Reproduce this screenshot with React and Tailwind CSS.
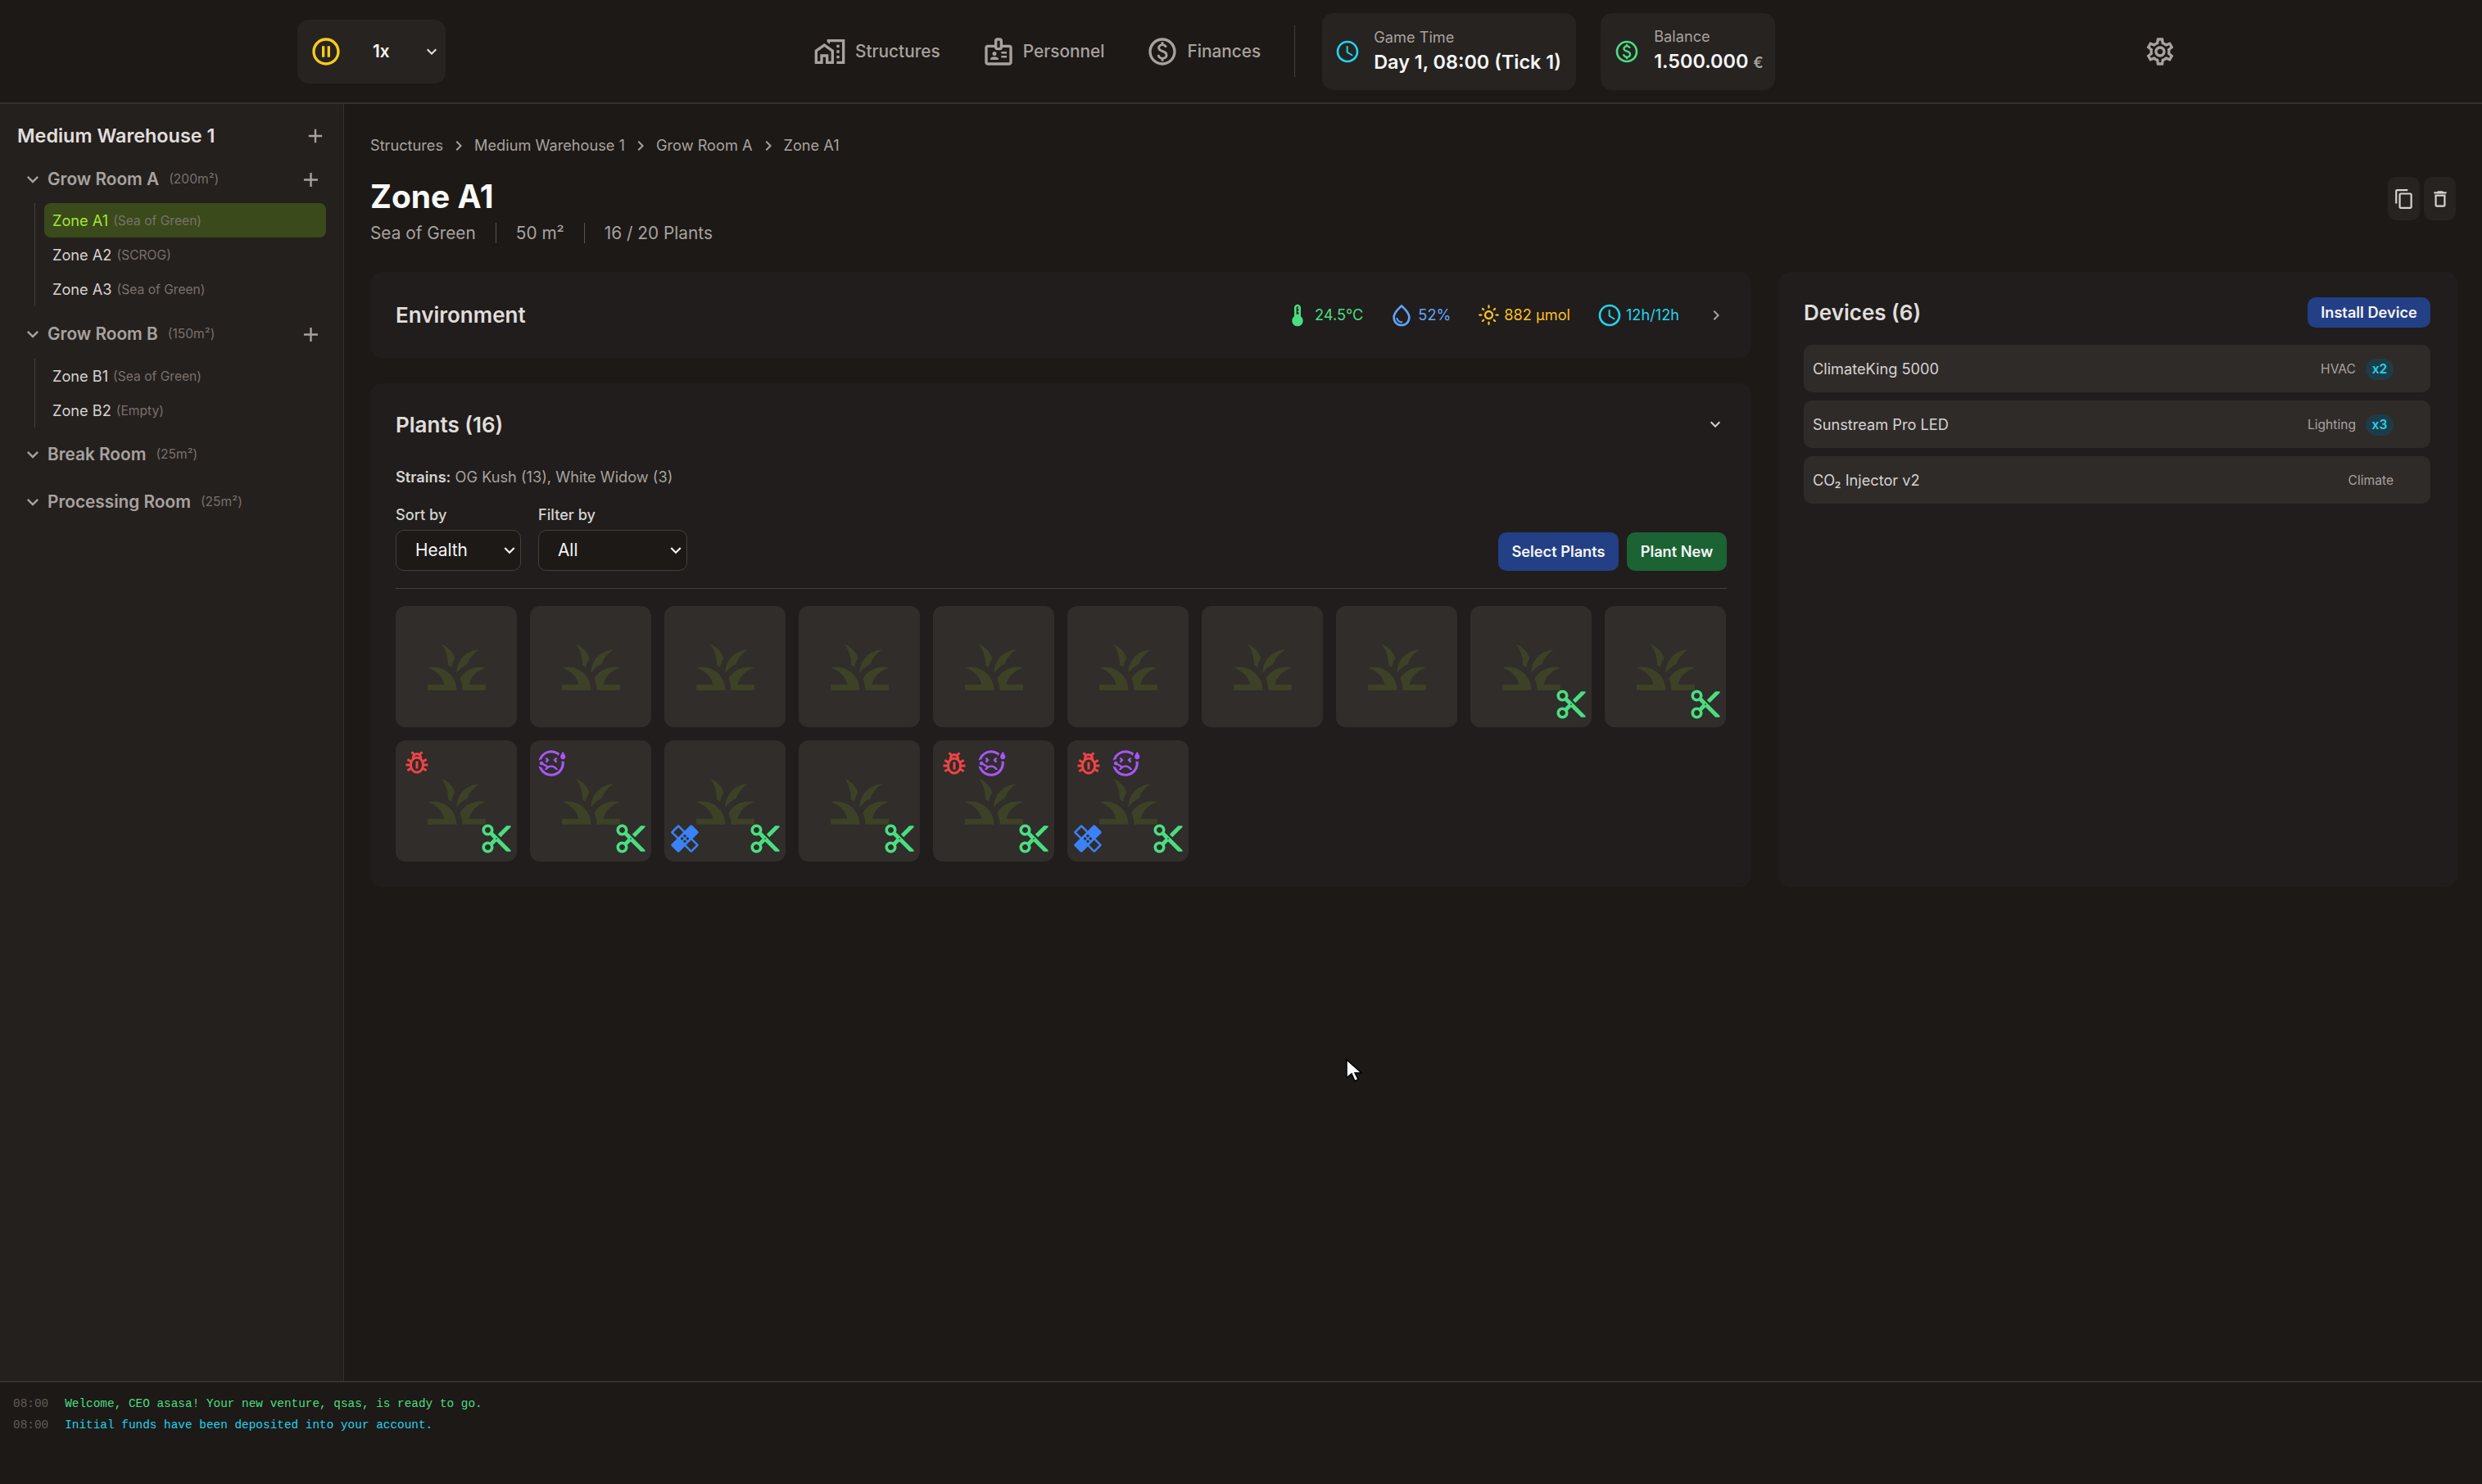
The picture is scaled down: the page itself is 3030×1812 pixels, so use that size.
import React from "react";
import {
  MdOutlineHomeWork, MdOutlineBadge, MdOutlinePaid, MdOutlineSchedule, MdOutlinePauseCircle, MdOutlineSettings,
  MdContentCopy, MdOutlineDelete, MdDeviceThermostat, MdOutlineWaterDrop, MdOutlineLightMode, MdGrass, MdContentCut,
  MdOutlinePestControl, MdOutlineSick, MdHealing, MdExpandMore, MdChevronRight, MdAdd,
} from "react-icons/md";

function NavItem({ icon: Icon, label, gap }) {
  return (
    <div className={`flex items-center ${gap}`}>
      <Icon size={40} className="text-[#a8a29e]" />
      <span className="text-[20.8px] font-medium text-[#a8a29e]">{label}</span>
    </div>
  );
}

function Header() {
  return (
    <header className="h-[127px] shrink-0 flex items-center border-b-2 border-[#35312e] pl-[363px] bg-[#1c1917]">
      <div className="w-[181px] h-[78px] rounded-[14px] bg-[#262321] flex items-center pl-[15px]">
        <MdOutlinePauseCircle size={40} className="text-[#facc15]" />
        <span className="ml-[37px] w-[22px] text-[20.8px] font-semibold text-[#f5f5f4]">1x</span>
        <MdExpandMore size={24} className="ml-[38px] text-[#e7e5e4]" />
      </div>
      <nav className="ml-[449px] flex items-center gap-[51px]">
        <NavItem icon={MdOutlineHomeWork} label="Structures" gap="gap-[11px]" />
        <NavItem icon={MdOutlineBadge} label="Personnel" gap="gap-[10px]" />
        <NavItem icon={MdOutlinePaid} label="Finances" gap="gap-[10px]" />
      </nav>
      <div className="ml-[41px] w-px h-[63px] bg-[#44403c]" />
      <div className="ml-[33px] w-[310px] h-[94px] rounded-[14px] bg-[#262321] flex items-center pl-[15px]">
        <MdOutlineSchedule size={32} className="text-[#22d3ee]" />
        <div className="ml-[16px]">
          <div className="text-[18.2px] leading-[26px] text-[#a8a29e]">Game Time</div>
          <div className="text-[23.4px] leading-[36px] font-semibold text-[#f5f5f4] whitespace-nowrap">Day 1, 08:00 (Tick 1)</div>
        </div>
      </div>
      <div className="ml-[30px] w-[213px] h-[94px] rounded-[14px] bg-[#262321] flex items-center pl-[16px]">
        <MdOutlinePaid size={32} className="text-[#4ade80]" />
        <div className="ml-[17px]">
          <div className="text-[18.2px] leading-[26px] text-[#a8a29e]">Balance</div>
          <div className="text-[23.4px] leading-[36px] font-semibold text-[#f5f5f4] whitespace-nowrap">1.500.000 <span className="text-[18.2px] text-[#a8a29e]">€</span></div>
        </div>
      </div>
      <MdOutlineSettings size={40} className="ml-[450px] text-[#a8a29e]" />
    </header>
  );
}

function Zone({ name, type, active }) {
  return (
    <div className={`h-[42px] rounded-[8px] flex items-center pl-[10px] pt-[1px] gap-[6px] ${active ? "bg-[#3a4a1a]" : ""}`}>
      <span className={`text-[18.2px] ${active ? "text-[#a3e635]" : "text-[#d6d3d1]"}`}>{name}</span>
      <span className="text-[15.6px] text-[#78716c]">{type}</span>
    </div>
  );
}

function Room({ name, size, plus, className = "mt-[13px]", zones, zonesMt = "mt-[9px]" }) {
  return (
    <div className={className}>
      <div className="h-[40px] flex items-center pl-[26px] pr-[25px]">
        <MdExpandMore size={28} className="text-[#a8a29e]" />
        <span className="ml-[4px] text-[20.8px] font-semibold text-[#a8a29e]">{name}</span>
        <span className="ml-[12px] text-[15.6px] text-[#78716c]">{size}</span>
        {plus && <MdAdd size={29} className="ml-auto text-[#a8a29e]" />}
      </div>
      {zones && (
        <div className={`${zonesMt} ml-[42px] w-[356px] border-l border-[#44403c] pl-[11px]`}>
          {zones.map((z) => <Zone key={z.name} {...z} />)}
        </div>
      )}
    </div>
  );
}

function Sidebar() {
  return (
    <aside className="w-[420px] shrink-0 bg-[#24201e] border-r border-[#35312e] pt-[19px]">
      <div className="h-[40px] flex items-center justify-between pl-[21px] pr-[20px]">
        <span className="text-[23.4px] font-semibold text-[#e0dedb]">Medium Warehouse 1</span>
        <MdAdd size={28} className="text-[#a8a29e]" />
      </div>
      <Room name="Grow Room A" size="(200m²)" plus zones={[
        { name: "Zone A1", type: "(Sea of Green)", active: true },
        { name: "Zone A2", type: "(SCROG)" },
        { name: "Zone A3", type: "(Sea of Green)" },
      ]} />
      <Room name="Grow Room B" size="(150m²)" plus className="mt-[14px]" zonesMt="mt-[10px]" zones={[
        { name: "Zone B1", type: "(Sea of Green)" },
        { name: "Zone B2", type: "(Empty)" },
      ]} />
      <Room name="Break Room" size="(25m²)" />
      <Room name="Processing Room" size="(25m²)" className="mt-[18px]" />
    </aside>
  );
}

function Stat({ icon: Icon, text, color, gap = "gap-[4px]", iconSize = 32, ml = "" }) {
  return (
    <div className={`flex items-center ${gap} ${color} ${ml}`}>
      <div className="w-[32px] flex justify-center"><Icon size={iconSize} /></div>
      <span className="text-[18.2px]">{text}</span>
    </div>
  );
}

function Tile({ bug, sick, heal, cut }) {
  return (
    <div className="relative h-[148px] rounded-[12px] bg-[#302d2b] flex items-center justify-center">
      <MdGrass size={85} className="text-[#3d4227]" />
      {(bug || sick) && (
        <div className="absolute left-[7px] top-[9px] flex items-center gap-[8px]">
          {bug && <MdOutlinePestControl size={36} className="ml-[1px] text-[#ef4444]" />}
          {sick && <MdOutlineSick size={38} className="text-[#a855f7]" />}
        </div>
      )}
      {heal && <MdHealing size={40} className="absolute left-[5px] bottom-[8px] text-[#3b82f6]" />}
      {cut && <MdContentCut size={42} className="absolute right-[4px] bottom-[7px] text-[#4ade80]" />}
    </div>
  );
}

const tiles = [
  {}, {}, {}, {}, {}, {}, {}, {}, { cut: true }, { cut: true },
  { bug: true, cut: true }, { sick: true, cut: true }, { heal: true, cut: true }, { cut: true },
  { bug: true, sick: true, cut: true }, { bug: true, sick: true, heal: true, cut: true },
];

function Picker({ label, value, width, options }) {
  return (
    <div>
      <div className="text-[18.2px] leading-[24px] font-medium text-[#d6d3d1]">{label}</div>
      <div className={`relative mt-[7px] ${width}`}>
        <select defaultValue={value} className="appearance-none block w-full h-[50px] pl-[23px] pr-[4px] rounded-[10px] border border-[#44403c] bg-[#1c1917] text-[20.8px] text-[#f5f5f4]">
          {options.map((o) => <option key={o}>{o}</option>)}
        </select>
        <MdExpandMore size={26} className="absolute right-[1px] top-[12px] text-[#f5f5f4] pointer-events-none" />
      </div>
    </div>
  );
}

function Device({ name, kind, count }) {
  return (
    <div className="h-[58px] rounded-[10px] bg-[#2f2b29] flex items-center pl-[11px] pr-[45px] pt-[1px]">
      <span className="text-[18.2px] text-[#d6d3d1]">{name}</span>
      <span className="ml-auto text-[15.6px] text-[#a8a29e]">{kind}</span>
      {count && <span className="ml-[12px] w-[34px] h-[26px] rounded-full bg-[#1e3c47] flex items-center justify-center text-[15.6px] font-semibold text-[#22d3ee]">{count}</span>}
    </div>
  );
}

function Main() {
  const crumbs = ["Structures", "Medium Warehouse 1", "Grow Room A", "Zone A1"];
  return (
    <main className="flex-1 min-w-0 pl-[32px] pr-[30px] pt-[39px] bg-[#1c1917]">
      <div className="h-[24px] flex items-center text-[18.2px] text-[#a8a29e]">
        {crumbs.map((c, i) => (
          <React.Fragment key={c}>
            {i > 0 && <MdChevronRight size={24} className="mx-[7px]" />}
            <span>{c}</span>
          </React.Fragment>
        ))}
      </div>
      <div className="mt-[26px] flex justify-between items-start">
        <div>
          <h1 className="h-[48px] text-[39px] leading-[48px] font-bold text-[#fafaf9]">Zone A1</h1>
          <div className="mt-[6px] h-[28px] flex items-center pt-[1px] text-[20.8px] text-[#a8a29e]">
            <span>Sea of Green</span>
            <span className="mx-[24px] w-px h-[25px] bg-[#57534e]" />
            <span>50 m²</span>
            <span className="mx-[24px] w-px h-[25px] bg-[#57534e]" />
            <span>16 / 20 Plants</span>
          </div>
        </div>
        <div className="flex gap-[5px] mr-[2px]">
          <button className="w-[39px] h-[53px] rounded-[10px] bg-[#262321] flex items-center justify-center text-[#d6d3d1]"><MdContentCopy size={26} /></button>
          <button className="w-[39px] h-[53px] rounded-[10px] bg-[#262321] flex items-center justify-center text-[#d6d3d1]"><MdOutlineDelete size={26} /></button>
        </div>
      </div>
      <div className="mt-[34px] flex gap-[33px] items-stretch">
        <div className="w-[1686px] flex flex-col gap-[31px]">
          <section className="h-[105px] rounded-[14px] bg-[#201d1c] flex items-center justify-between pl-[31px] pr-[31px]">
            <h2 className="text-[26px] font-semibold text-[#e0dedb]">Environment</h2>
            <div className="flex items-center">
              <Stat icon={MdDeviceThermostat} text="24.5°C" color="text-[#4ade80]" gap="gap-[5px]" />
              <Stat icon={MdOutlineWaterDrop} text="52%" color="text-[#60a5fa]" ml="ml-[31px]" />
              <Stat icon={MdOutlineLightMode} text="882 µmol" color="text-[#fbbf24]" gap="gap-[3px]" iconSize={27} ml="ml-[30px]" />
              <Stat icon={MdOutlineSchedule} text="12h/12h" color="text-[#22d3ee]" ml="ml-[32px]" />
              <MdChevronRight size={24} className="ml-[33px] text-[#a8a29e]" />
            </div>
          </section>
          <section className="rounded-[14px] bg-[#201d1c] pl-[31px] pr-[30px] pt-[32px] pb-[31px]">
            <div className="h-[36px] flex items-center justify-between">
              <h2 className="text-[26px] font-semibold text-[#e0dedb]">Plants (16)</h2>
              <MdExpandMore size={24} className="mr-[2px] text-[#d6d3d1]" />
            </div>
            <div className="mt-[34px] h-[24px] text-[18.2px] leading-[24px] text-[#a8a29e]">
              <span className="font-semibold text-[#d6d3d1]">Strains:</span> OG Kush (13), White Widow (3)
            </div>
            <div className="mt-[22px] pb-[21px] border-b border-[#44403c] flex items-end justify-between">
              <div className="flex gap-[21px]">
                <Picker label="Sort by" value="Health" width="w-[153px]" options={["Health", "Age", "Strain"]} />
                <Picker label="Filter by" value="All" width="w-[182px]" options={["All", "Healthy", "Sick"]} />
              </div>
              <div className="flex gap-[10px]">
                <button className="w-[147px] h-[47px] rounded-[10px] bg-[#233f85] text-[18.2px] font-semibold text-[#f5f5f4]">Select Plants</button>
                <button className="w-[122px] h-[47px] rounded-[10px] bg-[#1b6333] text-[18.2px] font-semibold text-[#f5f5f4]">Plant New</button>
              </div>
            </div>
            <div className="mt-[21px] w-[1624px] grid grid-cols-10 gap-[16px]">
              {tiles.map((t, i) => <Tile key={i} {...t} />)}
            </div>
          </section>
        </div>
        <section className="flex-1 rounded-[14px] bg-[#201d1c] pl-[31px] pr-[33px] pt-[31px]">
          <div className="h-[37px] flex items-center justify-between">
            <h2 className="text-[26px] font-semibold text-[#e0dedb]">Devices (6)</h2>
            <button className="w-[150px] h-[37px] rounded-[10px] bg-[#233f85] text-[18.2px] font-semibold text-[#f5f5f4]">Install Device</button>
          </div>
          <div className="mt-[21px] flex flex-col gap-[10px]">
            <Device name="ClimateKing 5000" kind="HVAC" count="x2" />
            <Device name="Sunstream Pro LED" kind="Lighting" count="x3" />
            <Device name="CO₂ Injector v2" kind="Climate" />
          </div>
        </section>
      </div>
    </main>
  );
}

function Log() {
  const lines = [
    ["Welcome, CEO asasa! Your new venture, qsas, is ready to go.", "text-[#4ade80]"],
    ["Initial funds have been deposited into your account.", "text-[#22d3ee]"],
  ];
  return (
    <footer className="h-[126px] shrink-0 border-t-2 border-[#35312e] bg-[#1c1917] pt-[13px] pl-[16px] font-['Liberation_Mono',monospace] text-[14.4px] leading-[26px]">
      {lines.map(([t, c]) => (
        <div key={t} className="flex gap-[20px]">
          <span className="text-[#625d59]">08:00</span>
          <span className={c}>{t}</span>
        </div>
      ))}
    </footer>
  );
}

export default function App() {
  return (
    <div className="relative w-[3030px] h-[1812px] overflow-hidden flex flex-col bg-[#1c1917] font-['Inter',sans-serif]">
      <Header />
      <div className="flex-1 min-h-0 flex">
        <Sidebar />
        <Main />
      </div>
      <Log />
      <svg className="absolute left-[1642px] top-[1292px]" width="22" height="30" viewBox="0 0 22 30">
        <path d="M2 2v22l6-5 4 9 4-2-4-8h8z" fill="#fff" stroke="#000" strokeWidth="1.5" />
      </svg>
    </div>
  );
}
